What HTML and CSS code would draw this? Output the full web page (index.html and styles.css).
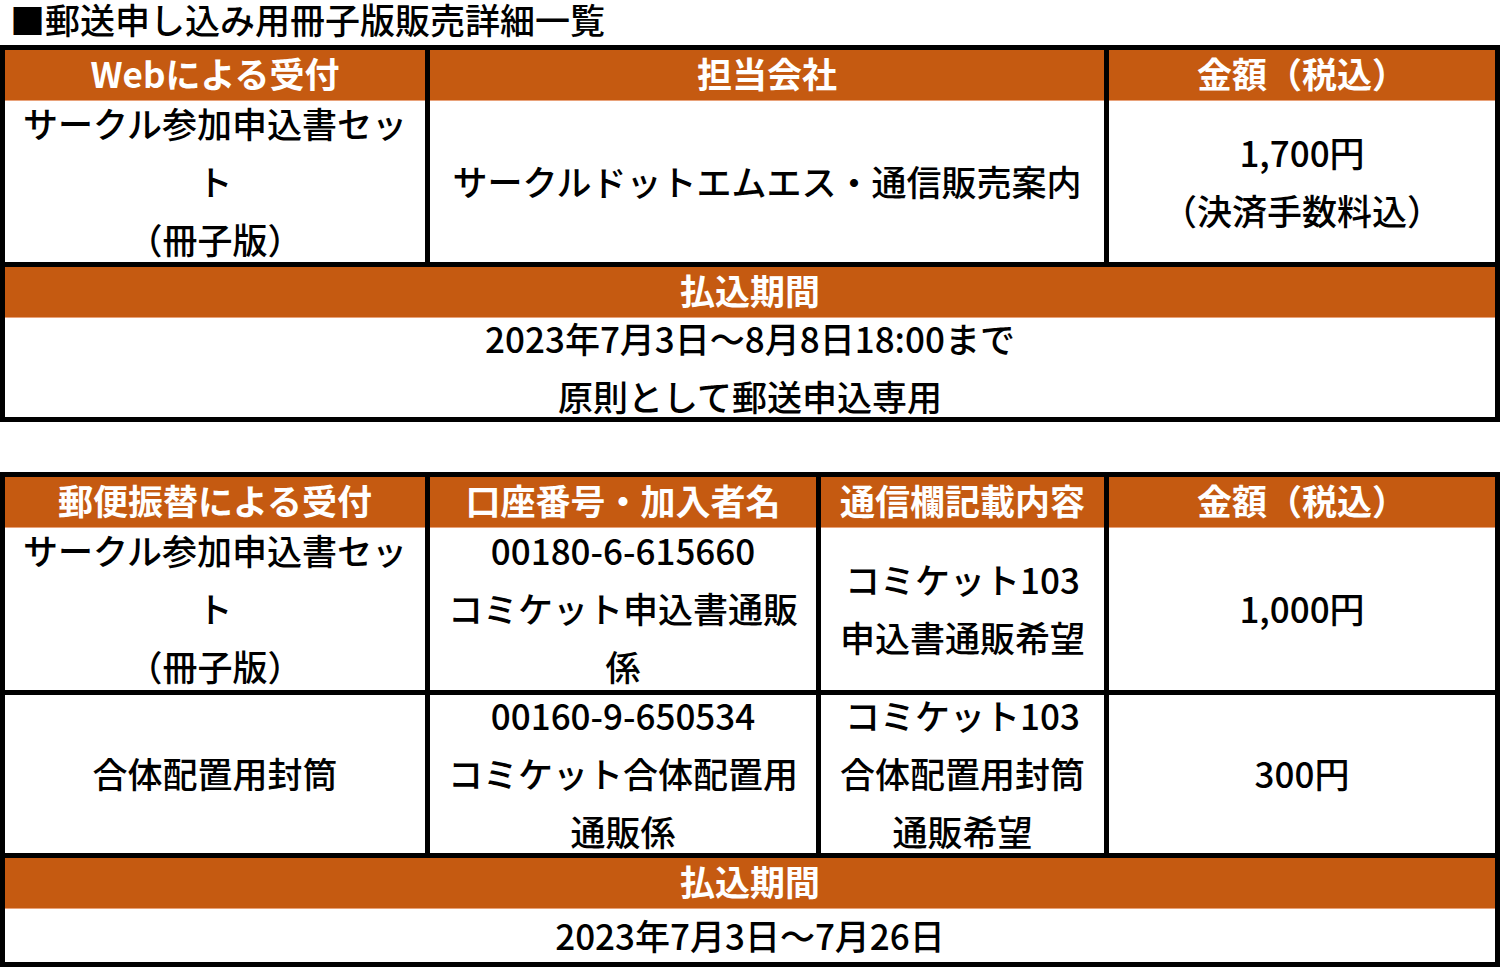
FILE: index.html
```html
<!DOCTYPE html>
<html lang="ja">
<head>
<meta charset="utf-8">
<title>郵送申し込み用冊子版販売詳細一覧</title>
<link rel="stylesheet" href="styles.css">
</head>
<body>
<h1 class="title">■郵送申し込み用冊子版販売詳細一覧</h1>

<div class="tbl t1">
  <div class="row head h51">
    <div class="cell">Webによる受付</div>
    <div class="cell">担当会社</div>
    <div class="cell">金額（税込）</div>
  </div>
  <div class="row body h161">
    <div class="cell">サークル参加申込書セッ<br>ト<br>（冊子版）</div>
    <div class="cell">サークルドットエムエス・通信販売案内</div>
    <div class="cell">1,700円<br>（決済手数料込）</div>
  </div>
  <div class="row head full h51 split">
    <div class="cell">払込期間</div>
  </div>
  <div class="row body full h99">
    <div class="cell">2023年7月3日～8月8日18:00まで<br>原則として郵送申込専用</div>
  </div>
</div>

<div class="tbl t2">
  <div class="row head h51">
    <div class="cell">郵便振替による受付</div>
    <div class="cell">口座番号・加入者名</div>
    <div class="cell">通信欄記載内容</div>
    <div class="cell">金額（税込）</div>
  </div>
  <div class="row body h162">
    <div class="cell">サークル参加申込書セッ<br>ト<br>（冊子版）</div>
    <div class="cell">00180-6-615660<br>コミケット申込書通販<br>係</div>
    <div class="cell">コミケット103<br>申込書通販希望</div>
    <div class="cell">1,000円</div>
  </div>
  <div class="row body h158 split">
    <div class="cell">合体配置用封筒</div>
    <div class="cell">00160-9-650534<br>コミケット合体配置用<br>通販係</div>
    <div class="cell">コミケット103<br>合体配置用封筒<br>通販希望</div>
    <div class="cell">300円</div>
  </div>
  <div class="row head full h51 split">
    <div class="cell">払込期間</div>
  </div>
  <div class="row body full h53">
    <div class="cell">2023年7月3日～7月26日</div>
  </div>
</div>
</body>
</html>
```

FILE: styles.css
```css
html, body {
  margin: 0;
  padding: 0;
  background: #fff;
}

body {
  font-family: "Noto Sans CJK JP", "Noto Sans", sans-serif;
  font-size: 35px;
  color: #000;
  width: 1500px;
}

.title {
  margin: 0 0 7px 0;
  padding-left: 10px;
  font-size: 35px;
  font-weight: 500;
  line-height: 38px;
  height: 38px;
  white-space: nowrap;
}

.tbl {
  background: #000;
  padding: 5px;
  display: flex;
  flex-direction: column;
}

.t2 {
  margin-top: 50px;
}

.row {
  display: grid;
  column-gap: 5px;
  grid-template-rows: minmax(0, 1fr);
}

.t1 .row {
  grid-template-columns: 420px 674px 386px;
}

.t2 .row {
  grid-template-columns: 420px 386px 283px 386px;
}

.tbl .row.full {
  grid-template-columns: 1fr;
}

.split {
  margin-top: 5px;
}

.h51 { height: 51px; }
.h53 { height: 53px; }
.h99 { height: 99px; }
.h158 { height: 158px; }
.h161 { height: 161px; }
.h162 { height: 162px; }

.cell {
  display: flex;
  flex-direction: column;
  justify-content: center;
  align-items: center;
  text-align: center;
  background: #fff;
  line-height: 58px;
  white-space: nowrap;
  min-height: 0;
  overflow: visible;
  box-sizing: border-box;
}

.body .cell {
  font-weight: 500;
  padding-bottom: 2px;
}

.head .cell {
  background: #c55a11;
  color: #fff;
  font-weight: 700;
  line-height: 51px;
  padding-bottom: 7px;
  box-shadow: inset 0 -1px 0 #e9a27a;
}
```
